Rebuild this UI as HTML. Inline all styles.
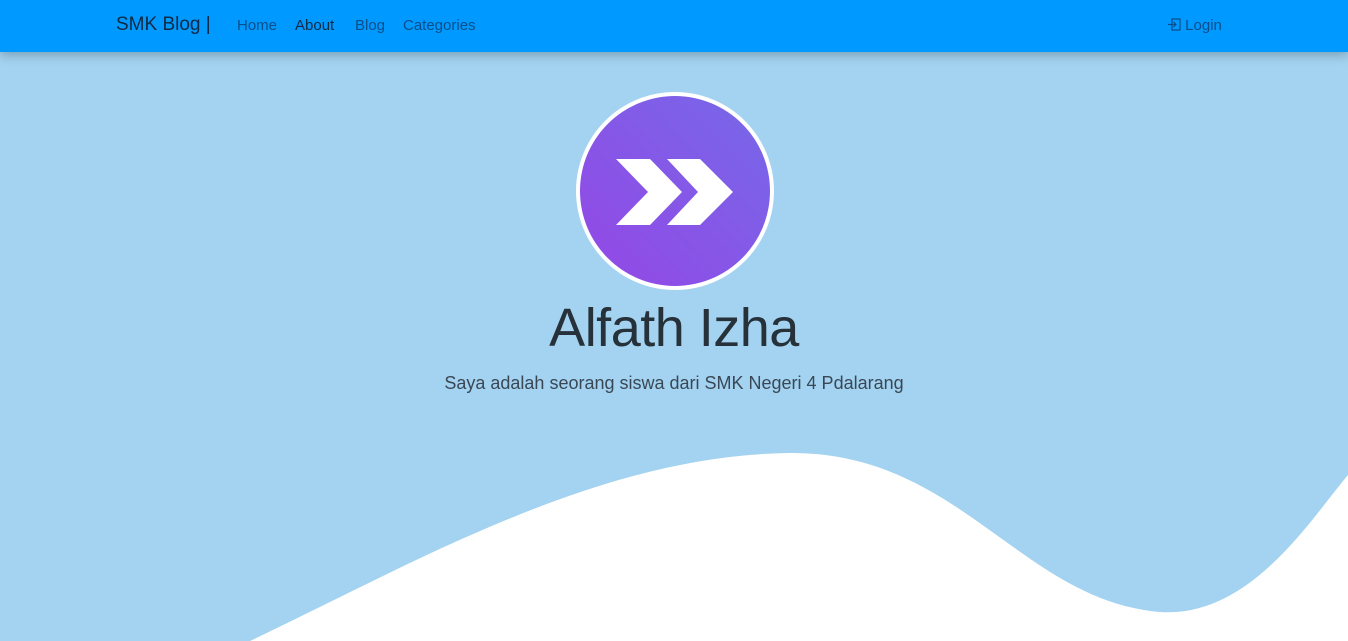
<!DOCTYPE html>
<html><head><meta charset="utf-8"><style>
*{margin:0;padding:0;box-sizing:border-box}
body{width:1348px;height:641px;overflow:hidden;background:#a3d3f0;font-family:"Liberation Sans",sans-serif;position:relative}
nav{position:absolute;left:0;top:0;width:1348px;height:52px;background:#0099ff;box-shadow:0 3px 10px rgba(0,0,0,.25);z-index:2}
.brand{position:absolute;left:116px;top:14px;font-size:19px;color:#0f2a44}
.nl{position:absolute;top:17px;font-size:15px;color:#0b4f8a}
.login{position:absolute;left:1168px;top:17px;font-size:15px;color:#0b4f8a}
h1{position:absolute;left:0;width:1348px;top:297px;text-align:center;font-weight:300;font-size:54px;color:#26313a;letter-spacing:-0.5px}
p{position:absolute;left:0;width:1348px;top:373px;text-align:center;font-size:18px;color:#3a4856;font-weight:300}
</style></head><body>
<nav>
<div class="brand">SMK Blog |</div>
<div class="nl" style="left:237px">Home</div>
<div class="nl" style="left:295px;color:#0f2a44">About</div>
<div class="nl" style="left:355px">Blog</div>
<div class="nl" style="left:403px">Categories</div>
<div class="login"><svg width="13" height="13" viewBox="0 0 13 13" style="vertical-align:-1px"><rect x="4" y="1" width="8" height="11" fill="none" stroke="#0b4f8a" stroke-width="1.2"/><path d="M0 6.5H8M5.5 4L8 6.5 5.5 9" fill="none" stroke="#0b4f8a" stroke-width="1.2"/></svg> Login</div>
</nav>
<svg width="1348" height="641" style="position:absolute;left:0;top:0">
<defs><linearGradient id="g" x1="0" y1="1" x2="1" y2="0"><stop offset="0" stop-color="#9447e6"/><stop offset="1" stop-color="#7669e8"/></linearGradient></defs>
<path d="M250 641 C420 560 600 455 790 453 C960 452 1020 600 1160 612 C1250 618 1310 520 1348 475 L1348 641 Z" fill="#fff"/>
<circle cx="675" cy="191" r="99" fill="#fff"/>
<circle cx="675" cy="191" r="95" fill="url(#g)"/>
<path d="M616 159H650L682 192L650 225H616L648 192Z" fill="#fff"/>
<path d="M667 159H700L733 192L700 225H667L698 192Z" fill="#fff"/>
</svg>
<h1>Alfath Izha</h1>
<p>Saya adalah seorang siswa dari SMK Negeri 4 Pdalarang</p>
</body></html>
